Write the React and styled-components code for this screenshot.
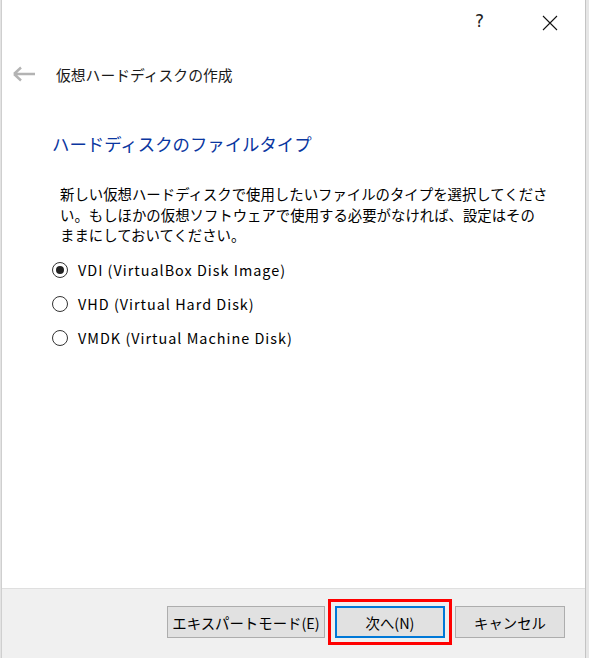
import styled, { createGlobalStyle } from "styled-components";

const Global = createGlobalStyle`
  html, body {
    margin: 0;
    padding: 0;
    background: #ffffff;
  }
  body {
    font-family: "Noto Sans CJK JP", "Noto Sans", sans-serif;
    color: #000;
  }
`;

const Screen = styled.div`
  display: flex;
  width: 589px;
  height: 658px;
  overflow: hidden;
`;

const LeftEdge = styled.div`
  width: 2px;
  background: #e3e3e3;
  border-right: 1px solid #cfcfcf;
  box-sizing: border-box;
`;

const RightEdge = styled.div`
  width: 4px;
  background: #e6e6e6;
  border-left: 1px solid #c4c4c4;
  box-sizing: border-box;
`;

const Dialog = styled.div`
  flex: 1;
  display: flex;
  flex-direction: column;
  background: #ffffff;
`;

const TitleBar = styled.div`
  height: 46px;
  display: flex;
  justify-content: flex-end;
  align-items: center;
  padding-right: 27px;
  gap: 58px;
`;

const Help = styled.span`
  font-family: "DejaVu Sans", sans-serif;
  font-size: 17px;
  color: #222;
  line-height: 1;
  margin-top: -4px;
`;

const Header = styled.div`
  display: flex;
  align-items: center;
  height: 56px;
  padding-left: 10px;
  gap: 20px;
`;

const HeaderTitle = styled.div`
  font-size: 14.8px;
  color: #1a1a1a;
`;

const Content = styled.div`
  flex: 1;
  padding: 29px 0 0 50px;
`;

const Heading = styled.h1`
  margin: 0;
  font-size: 17.4px;
  font-weight: 400;
  color: #0a36a0;
  line-height: 26px;
`;

const Paragraph = styled.p`
  margin: 27px 0 0 8px;
  font-size: 14.4px;
  line-height: 20.5px;
  white-space: nowrap;
`;

const Options = styled.div`
  display: flex;
  flex-direction: column;
  gap: 12px;
  margin-top: 13px;
`;

const Option = styled.label`
  display: flex;
  align-items: center;
  gap: 10px;
  height: 22px;
  font-size: 14.4px;
  letter-spacing: 1px;
`;

const Radio = styled.span`
  width: 16px;
  height: 16px;
  border: 1px solid #333;
  border-radius: 50%;
  box-sizing: border-box;
  display: flex;
  align-items: center;
  justify-content: center;

  &::after {
    content: "";
    width: 8px;
    height: 8px;
    border-radius: 50%;
    background: ${(p) => (p.$checked ? "#222" : "transparent")};
  }
`;

const Footer = styled.div`
  height: 70px;
  box-sizing: border-box;
  background: #f0f0f0;
  border-top: 1px solid #dfdfdf;
  display: flex;
  justify-content: flex-end;
  align-items: flex-start;
  padding: 17px 20px 0 0;
  gap: 10px;
`;

const Button = styled.button`
  width: ${(p) => p.$width}px;
  height: 32px;
  box-sizing: border-box;
  background: #e1e1e1;
  border: ${(p) => (p.$primary ? "2px solid #0078d7" : "1px solid #adadad")};
  font-family: "Noto Sans CJK JP", sans-serif;
  font-size: 14.4px;
  color: #000;
  padding: 0;
  outline: ${(p) => (p.$marked ? "3px solid #ff0000" : "none")};
  outline-offset: 4px;
`;

const BackArrow = () => (
  <svg width="24" height="16" viewBox="0 0 24 16">
    <path
      d="M2 8 H23 M2 8 L9 1.5 M2 8 L9 14.5"
      stroke="#b3b3b3"
      strokeWidth="2.4"
      fill="none"
    />
  </svg>
);

const CloseIcon = () => (
  <svg width="16" height="16" viewBox="0 0 16 16">
    <path d="M1 1 L15 15 M15 1 L1 15" stroke="#111" strokeWidth="1.1" fill="none" />
  </svg>
);

const options = [
  { label: "VDI (VirtualBox Disk Image)", checked: true },
  { label: "VHD (Virtual Hard Disk)" },
  { label: "VMDK (Virtual Machine Disk)" },
];

const App = () => {
  return (
    <>
      <Global />
      <Screen>
        <LeftEdge />
        <Dialog>
          <TitleBar>
            <Help>?</Help>
            <CloseIcon />
          </TitleBar>
          <Header>
            <BackArrow />
            <HeaderTitle>仮想ハードディスクの作成</HeaderTitle>
          </Header>
          <Content>
            <Heading>ハードディスクのファイルタイプ</Heading>
            <Paragraph>
              新しい仮想ハードディスクで使用したいファイルのタイプを選択してくださ
              <br />
              い。もしほかの仮想ソフトウェアで使用する必要がなければ、設定はその
              <br />
              ままにしておいてください。
            </Paragraph>
            <Options>
              {options.map((o) => (
                <Option key={o.label}>
                  <Radio $checked={o.checked} />
                  {o.label}
                </Option>
              ))}
            </Options>
          </Content>
          <Footer>
            <Button $width={158}>エキスパートモード(E)</Button>
            <Button $width={110} $primary $marked>
              次へ(N)
            </Button>
            <Button $width={110}>キャンセル</Button>
          </Footer>
        </Dialog>
        <RightEdge />
      </Screen>
    </>
  );
};

export default App;
